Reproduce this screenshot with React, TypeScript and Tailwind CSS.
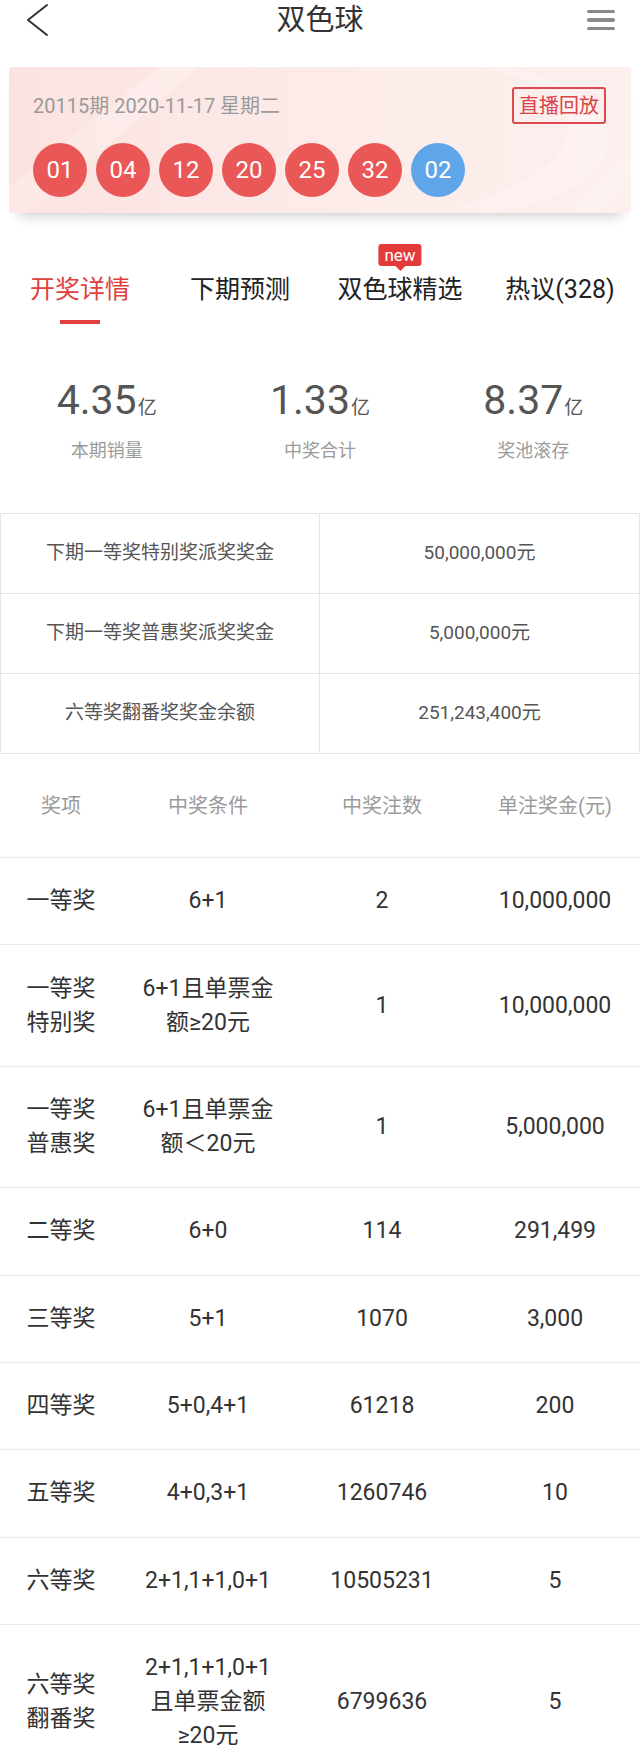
import React from 'react';

const BALLS = [
  { n: '01', blue: false },
  { n: '04', blue: false },
  { n: '12', blue: false },
  { n: '20', blue: false },
  { n: '25', blue: false },
  { n: '32', blue: false },
  { n: '02', blue: true },
];

const TABS = ['开奖详情', '下期预测', '双色球精选', '热议(328)'];

const STATS = [
  { value: '4.35', label: '本期销量' },
  { value: '1.33', label: '中奖合计' },
  { value: '8.37', label: '奖池滚存' },
];

const POOL = [
  { k: '下期一等奖特别奖派奖奖金', v: '50,000,000元' },
  { k: '下期一等奖普惠奖派奖奖金', v: '5,000,000元' },
  { k: '六等奖翻番奖奖金余额', v: '251,243,400元' },
];

const PRIZES: { name: string[]; cond: string[]; count: string; money: string }[] = [
  { name: ['一等奖'], cond: ['6+1'], count: '2', money: '10,000,000' },
  { name: ['一等奖', '特别奖'], cond: ['6+1且单票金', '额≥20元'], count: '1', money: '10,000,000' },
  { name: ['一等奖', '普惠奖'], cond: ['6+1且单票金', '额＜20元'], count: '1', money: '5,000,000' },
  { name: ['二等奖'], cond: ['6+0'], count: '114', money: '291,499' },
  { name: ['三等奖'], cond: ['5+1'], count: '1070', money: '3,000' },
  { name: ['四等奖'], cond: ['5+0,4+1'], count: '61218', money: '200' },
  { name: ['五等奖'], cond: ['4+0,3+1'], count: '1260746', money: '10' },
  { name: ['六等奖'], cond: ['2+1,1+1,0+1'], count: '10505231', money: '5' },
  { name: ['六等奖', '翻番奖'], cond: ['2+1,1+1,0+1', '且单票金额', '≥20元'], count: '6799636', money: '5' },
];

const Lines: React.FC<{ lines: string[] }> = ({ lines }) => (
  <div className="flex flex-col items-center">
    {lines.map((l) => (
      <span key={l} className="whitespace-nowrap">{l}</span>
    ))}
  </div>
);

export default function App() {
  return (
    <div className="w-[640px] min-h-screen bg-white font-['Roboto','Noto_Sans_CJK_SC',sans-serif] text-[#333]">
      {/* Header */}
      <header className="flex items-center h-[40px]">
        <div className="w-[80px] pl-[26px] flex items-center">
          <svg width="24" height="34" viewBox="0 0 24 34" fill="none">
            <path d="M21 2 L2 17 L21 32" stroke="#333" strokeWidth="2" strokeLinecap="round" strokeLinejoin="round" />
          </svg>
        </div>
        <h1 className="flex-1 text-center text-[29px] leading-[40px] text-[#333]">双色球</h1>
        <div className="w-[80px] pr-[25px] flex justify-end">
          <div className="flex flex-col gap-[5px] w-[28px]">
            <span className="h-[3.5px] rounded-full bg-[#8a8a8a]" />
            <span className="h-[3.5px] rounded-full bg-[#8a8a8a]" />
            <span className="h-[3.5px] rounded-full bg-[#8a8a8a]" />
          </div>
        </div>
      </header>

      {/* Draw card */}
      <div className="mx-[9px] mt-[27px] relative overflow-hidden rounded-[3px] bg-gradient-to-r from-[#fbe3e1] via-[#fcebe9] to-[#fcefed] shadow-[0_13px_12px_-10px_rgba(0,0,0,0.2)] pt-[20px] pb-[16px] pl-[24px] pr-[24px]">
        <svg className="absolute inset-0 w-full h-full pointer-events-none" viewBox="0 0 622 146" preserveAspectRatio="none" aria-hidden="true">
          <path d="M0 120 L150 0 L190 0 L20 146 L0 146 Z" fill="rgba(255,255,255,0.22)" />
          <path d="M430 146 C520 120 560 90 560 60 C560 30 520 10 470 0 L500 0 C560 15 600 40 600 70 C600 105 560 130 490 146 Z" fill="rgba(255,255,255,0.25)" />
          <path d="M560 146 L622 80 L622 110 L590 146 Z" fill="rgba(255,255,255,0.2)" />
        </svg>
        <div className="relative flex items-center justify-between h-[37px]">
          <span className="text-[20px] text-[#9a9a9a]">20115期 2020-11-17 星期二</span>
          <span className="h-[37px] px-[5px] flex items-center border-2 border-[#dc4a4e] rounded-[3px] text-[20px] leading-none text-[#d9434a] mr-[1px]">
            直播回放
          </span>
        </div>
        <div className="relative mt-[19px] flex gap-[9px]">
          {BALLS.map((b, i) => (
            <div
              key={i}
              className={
                'w-[54px] h-[54px] rounded-full flex items-center justify-center text-white text-[24px] ' +
                (b.blue ? 'bg-[#5fa5ea]' : 'bg-[#ea5757]')
              }
            >
              {b.n}
            </div>
          ))}
        </div>
      </div>

      {/* Tabs */}
      <nav className="grid grid-cols-4 mt-[60px]">
        {TABS.map((t, i) => (
          <div key={t} className="flex flex-col items-center">
            <div className="relative">
              <span className={'block text-[25px] leading-[34px] whitespace-nowrap ' + (i === 0 ? 'text-[#e0403e]' : 'text-[#222]')}>
                {t}
              </span>
              {i === 2 && (
                <div className="absolute left-1/2 -translate-x-1/2 top-[-29px] flex flex-col items-center">
                  <span className="h-[22px] px-[6px] rounded-[3px] bg-[#e33b3b] text-white text-[17px] leading-[22px]">new</span>
                  <span className="w-0 h-0 border-l-[5px] border-r-[5px] border-t-[5px] border-l-transparent border-r-transparent border-t-[#e33b3b]" />
                </div>
              )}
            </div>
            <span className={'mt-[13px] h-[4px] w-[40px] ' + (i === 0 ? 'bg-[#e0403e]' : 'bg-transparent')} />
          </div>
        ))}
      </nav>

      {/* Stats */}
      <section className="grid grid-cols-3 mt-[52px]">
        {STATS.map((s) => (
          <div key={s.label} className="flex flex-col items-center">
            <div className="h-[48px] flex items-baseline text-[#555]">
              <span className="text-[41px] leading-[48px]">{s.value}</span>
              <span className="text-[19px] ml-[1px]">亿</span>
            </div>
            <span className="mt-[14px] text-[18px] leading-[26px] text-[#9b9b9b]">{s.label}</span>
          </div>
        ))}
      </section>

      {/* Pool table */}
      <section className="mt-[49px] border-t border-x border-[#e6e6e6]">
        {POOL.map((p) => (
          <div key={p.k} className="grid grid-cols-2 h-[80px] border-b border-[#e6e6e6] text-[19px] text-[#555]">
            <div className="flex items-center justify-center border-r border-[#e6e6e6]">{p.k}</div>
            <div className="flex items-center justify-center">{p.v}</div>
          </div>
        ))}
      </section>

      {/* Prize table */}
      <section>
        <div className="grid grid-cols-[122px_172px_176px_170px] h-[104px] items-center border-b border-[#ececec] text-[20px] text-[#9b9b9b] text-center">
          <span>奖项</span>
          <span>中奖条件</span>
          <span>中奖注数</span>
          <span>单注奖金(元)</span>
        </div>
        {PRIZES.map((r, i) => (
          <div
            key={i}
            className="grid grid-cols-[122px_172px_176px_170px] items-center py-[26.2px] leading-[34px] border-b border-[#ececec] text-[23px] text-[#333] text-center"
          >
            <Lines lines={r.name} />
            <Lines lines={r.cond} />
            <span>{r.count}</span>
            <span>{r.money}</span>
          </div>
        ))}
      </section>
    </div>
  );
}
